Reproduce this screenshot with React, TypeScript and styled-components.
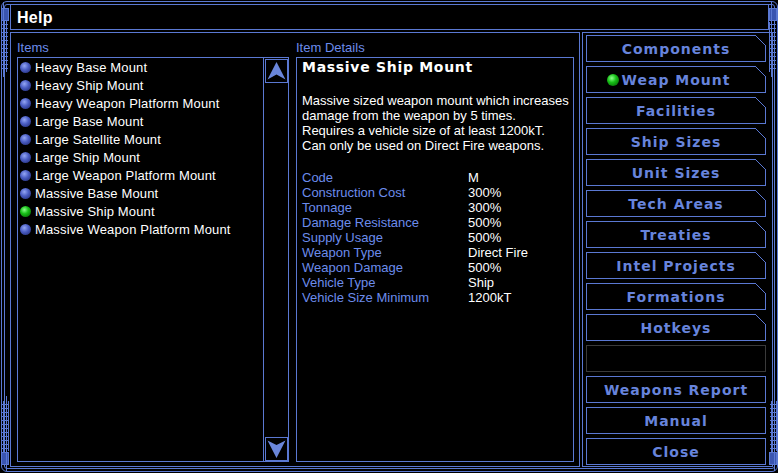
import React from 'react'
import styled, { createGlobalStyle } from 'styled-components'

const LINE = '#5a78d2'
const LABEL = '#6c8cec'
const NAV_TEXT = '#6784dc'

const GlobalStyle = createGlobalStyle`
  html, body {
    margin: 0;
    background: #000;
  }
  * {
    box-sizing: border-box;
  }
`

const items = [
  'Heavy Base Mount',
  'Heavy Ship Mount',
  'Heavy Weapon Platform Mount',
  'Large Base Mount',
  'Large Satellite Mount',
  'Large Ship Mount',
  'Large Weapon Platform Mount',
  'Massive Base Mount',
  'Massive Ship Mount',
  'Massive Weapon Platform Mount',
]

const description = [
  'Massive sized weapon mount which increases',
  'damage from the weapon by 5 times.',
  'Requires a vehicle size of at least 1200kT.',
  'Can only be used on Direct Fire weapons.',
]

const properties = [
  ['Code', 'M'],
  ['Construction Cost', '300%'],
  ['Tonnage', '300%'],
  ['Damage Resistance', '500%'],
  ['Supply Usage', '500%'],
  ['Weapon Type', 'Direct Fire'],
  ['Weapon Damage', '500%'],
  ['Vehicle Type', 'Ship'],
  ['Vehicle Size Minimum', '1200kT'],
]

const topics = [
  'Components',
  'Weap Mount',
  'Facilities',
  'Ship Sizes',
  'Unit Sizes',
  'Tech Areas',
  'Treaties',
  'Intel Projects',
  'Formations',
  'Hotkeys',
]

const actions = ['Weapons Report', 'Manual', 'Close']

const Screen = styled.div`
  position: relative;
  width: 778px;
  height: 473px;
  padding: 1px 0 1px 1px;
  background: #000;
  font-family: 'Liberation Sans', Arial, sans-serif;
  overflow: hidden;
`

const OuterFrame = styled.div`
  height: 100%;
  border: 1px solid ${LINE};
  border-radius: 6px;
  padding: 2px;
`

const InnerFrame = styled.div`
  height: 100%;
  border: 1px solid ${LINE};
  border-radius: 3px;
  display: flex;
  flex-direction: column;
`

const TitleBar = styled.div`
  height: 25px;
  margin: 0 5px 0 5px;
  border: 1px solid ${LINE};
  border-top: none;
  padding: 5px 0 0 6px;
  color: #fff;
  font-weight: bold;
  font-size: 16px;
  line-height: 16px;
  letter-spacing: 0.3px;
`

const Body = styled.div`
  flex: 1;
  display: flex;
  margin: 2px 0 1px 5px;
`

const ContentFrame = styled.div`
  width: 570px;
  border: 1px solid ${LINE};
  padding: 8px 5px 4px 6px;
  display: flex;
  gap: 7px;
`

const Column = styled.div<{ $width: number }>`
  width: ${(p) => p.$width}px;
  display: flex;
  flex-direction: column;
`

const PaneLabel = styled.div`
  color: ${LABEL};
  font-size: 13px;
  line-height: 14px;
  height: 14px;
  margin-bottom: 2px;
  white-space: nowrap;
`

const ListBox = styled.div`
  flex: 1;
  border: 1px solid ${LINE};
  display: flex;
`

const ItemList = styled.div`
  flex: 1;
  padding-left: 2px;
`

const ItemRow = styled.div`
  height: 18px;
  display: flex;
  align-items: center;
  gap: 4px;
  color: #fff;
  font-size: 13px;
  letter-spacing: 0.15px;
  white-space: nowrap;
`

const Bullet = styled.span<{ $active?: boolean }>`
  width: 11px;
  height: 11px;
  border-radius: 50%;
  flex: none;
  background: ${(p) =>
    p.$active
      ? 'radial-gradient(circle at 40% 35%, #8dff8d 0%, #18c018 40%, #005000 100%)'
      : 'radial-gradient(circle at 40% 35%, #94a6f4 0%, #4b5ec4 42%, #1a2268 100%)'};
`

const ScrollTrack = styled.div`
  width: 25px;
  border-left: 1px solid ${LINE};
  display: flex;
  flex-direction: column;
  justify-content: space-between;
  padding: 1px 1px 0 1px;
`

const ScrollButton = styled.div`
  width: 23px;
  height: 24px;
  border: 1px solid ${LINE};
  display: flex;
  align-items: center;
  justify-content: center;
`

const DetailBox = styled.div`
  flex: 1;
  border: 1px solid ${LINE};
  padding: 1px 5px 0 5px;
  color: #fff;
  font-size: 13px;
`

const DetailTitle = styled.div`
  font-family: 'DejaVu Sans', sans-serif;
  font-weight: bold;
  font-size: 14px;
  line-height: 16px;
  letter-spacing: 0.7px;
  white-space: nowrap;
`

const Description = styled.div`
  margin-top: 18px;
  line-height: 15px;
  white-space: nowrap;
`

const PropGrid = styled.div`
  margin-top: 17px;
  display: grid;
  grid-template-columns: 166px auto;
  line-height: 15px;
  white-space: nowrap;
`

const PropName = styled.span`
  color: ${LABEL};
`

const PropValue = styled.span`
  color: #fff;
`

const NavFrame = styled.div`
  width: 191px;
  margin-left: 2px;
  border: 1px solid ${LINE};
  padding: 2px 6px 0 3px;
  display: flex;
  flex-direction: column;
  gap: 4px;
`

const NavButton = styled.div<{ $chamfer?: boolean; $blank?: boolean }>`
  position: relative;
  height: 27px;
  border: 1px solid ${(p) => (p.$blank ? '#3a3a3a' : LINE)};
  display: flex;
  align-items: center;
  justify-content: center;
  color: ${NAV_TEXT};
  font-family: 'DejaVu Sans', sans-serif;
  font-weight: bold;
  font-size: 14px;
  letter-spacing: 1px;
  white-space: nowrap;

  &::after {
    content: '';
    display: ${(p) => (p.$chamfer ? 'block' : 'none')};
    position: absolute;
    top: -1px;
    right: -1px;
    width: 11px;
    height: 11px;
    background: linear-gradient(
      to top right,
      #000 0 46%,
      ${LINE} 46% 54%,
      #000 54% 100%
    );
  }
`

const NavText = styled.span`
  position: relative;
`

const NavDot = styled.span`
  position: absolute;
  left: -15px;
  top: 50%;
  margin-top: -6px;
  width: 12px;
  height: 12px;
  border-radius: 50%;
  background: radial-gradient(circle at 40% 35%, #8dff8d 0%, #18c018 40%, #005000 100%);
`

const Greeble = styled.svg<{ $x: number; $y: number }>`
  position: absolute;
  left: ${(p) => p.$x}px;
  top: ${(p) => p.$y}px;
`

function Pipe({ x, y, flip }: { x: number; y: number; flip?: boolean }) {
  const rungs = []
  for (let i = 0; i < 12; i++) {
    rungs.push(<line key={i} x1={2} x2={8} y1={22 + i * 4 + 0.5} y2={22 + i * 4 + 0.5} />)
  }
  return (
    <Greeble $x={x} $y={y} width={10} height={75} viewBox="0 0 10 75">
      <g
        transform={flip ? 'translate(10 75) scale(-1 -1)' : undefined}
        stroke={LINE}
        strokeWidth={1}
        fill="none"
      >
        <rect x={1.5} y={6.5} width={7} height={12} fill="#3a55b0" />
        <line x1={3.5} y1={0} x2={3.5} y2={75} />
        <line x1={6.5} y1={18} x2={6.5} y2={70} />
        <line x1={1.5} y1={20} x2={1.5} y2={70} />
        {rungs}
      </g>
    </Greeble>
  )
}

function UpArrow() {
  return (
    <svg width={21} height={20} viewBox="0 0 21 20">
      <path d="M10.5 1 L19.5 18.5 L10.5 13.5 L1.5 18.5 Z" fill="#6a86da" />
    </svg>
  )
}

function DownArrow() {
  return (
    <svg width={21} height={20} viewBox="0 0 21 20">
      <path d="M1.5 1.5 L10.5 6 L19.5 1.5 L10.5 19 Z" fill="#6a86da" />
    </svg>
  )
}

export default function App() {
  return (
    <Screen>
      <GlobalStyle />
      <OuterFrame>
        <InnerFrame>
          <TitleBar>Help</TitleBar>
          <Body>
            <ContentFrame>
              <Column $width={272}>
                <PaneLabel>Items</PaneLabel>
                <ListBox>
                  <ItemList>
                    {items.map((name, i) => (
                      <ItemRow key={name}>
                        <Bullet $active={i === 8} />
                        {name}
                      </ItemRow>
                    ))}
                  </ItemList>
                  <ScrollTrack>
                    <ScrollButton>
                      <UpArrow />
                    </ScrollButton>
                    <ScrollButton>
                      <DownArrow />
                    </ScrollButton>
                  </ScrollTrack>
                </ListBox>
              </Column>
              <Column $width={278}>
                <PaneLabel>Item Details</PaneLabel>
                <DetailBox>
                  <DetailTitle>Massive Ship Mount</DetailTitle>
                  <Description>
                    {description.map((l) => (
                      <div key={l}>{l}</div>
                    ))}
                  </Description>
                  <PropGrid>
                    {properties.map(([k, v]) => (
                      <React.Fragment key={k}>
                        <PropName>{k}</PropName>
                        <PropValue>{v}</PropValue>
                      </React.Fragment>
                    ))}
                  </PropGrid>
                </DetailBox>
              </Column>
            </ContentFrame>
            <NavFrame>
              {topics.map((t, i) => (
                <NavButton key={t} $chamfer>
                  <NavText>
                    {i === 1 && <NavDot />}
                    {t}
                  </NavText>
                </NavButton>
              ))}
              <NavButton $blank />
              {actions.map((a) => (
                <NavButton key={a}>
                  <NavText>{a}</NavText>
                </NavButton>
              ))}
            </NavFrame>
          </Body>
        </InnerFrame>
      </OuterFrame>
      <Pipe x={0} y={2} />
      <Pipe x={0} y={396} flip />
      <Pipe x={768} y={2} />
      <Pipe x={768} y={396} flip />
    </Screen>
  )
}
